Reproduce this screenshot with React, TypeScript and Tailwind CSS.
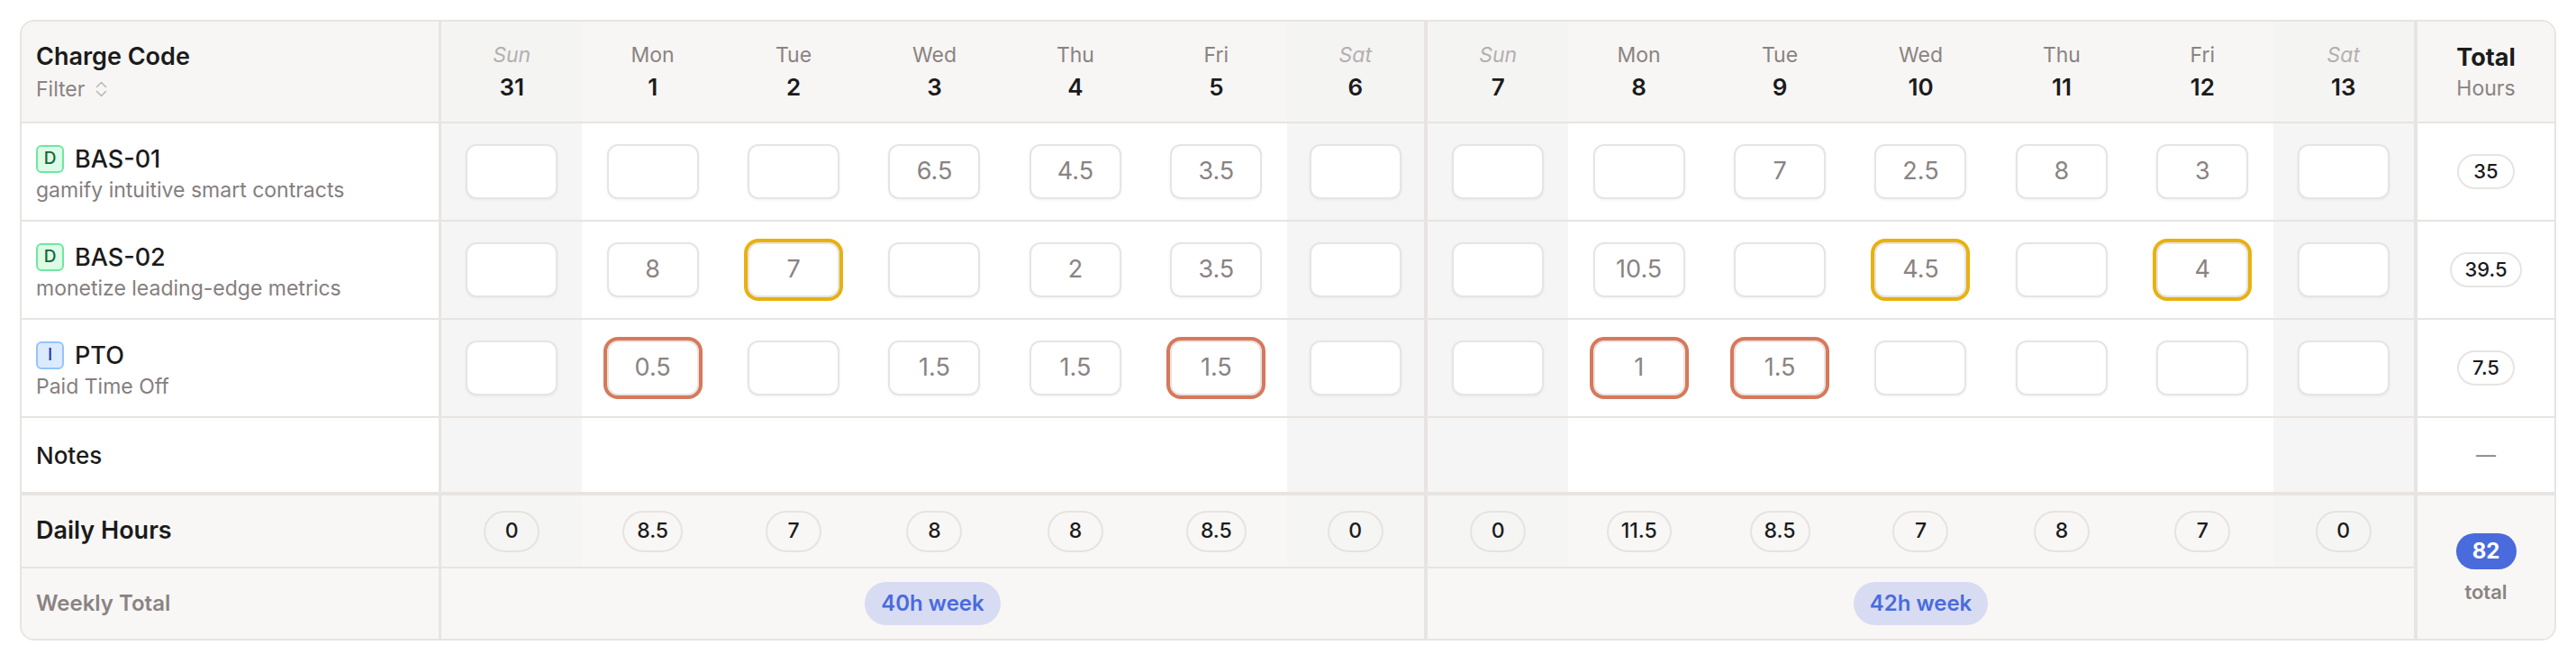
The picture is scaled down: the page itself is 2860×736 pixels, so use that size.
import React from "react";

type Mark = "" | "y" | "o";
type Cell = { v: string; m?: Mark };

const days = [
  { d: "Sun", n: "31", we: true },
  { d: "Mon", n: "1" },
  { d: "Tue", n: "2" },
  { d: "Wed", n: "3" },
  { d: "Thu", n: "4" },
  { d: "Fri", n: "5" },
  { d: "Sat", n: "6", we: true },
  { d: "Sun", n: "7", we: true },
  { d: "Mon", n: "8" },
  { d: "Tue", n: "9" },
  { d: "Wed", n: "10" },
  { d: "Thu", n: "11" },
  { d: "Fri", n: "12" },
  { d: "Sat", n: "13", we: true },
];

const c = (v: string, m: Mark = ""): Cell => ({ v, m });

const rows = [
  {
    badge: "D",
    kind: "g",
    code: "BAS-01",
    desc: "gamify intuitive smart contracts",
    total: "35",
    cells: [c(""), c(""), c(""), c("6.5"), c("4.5"), c("3.5"), c(""), c(""), c(""), c("7"), c("2.5"), c("8"), c("3"), c("")],
  },
  {
    badge: "D",
    kind: "g",
    code: "BAS-02",
    desc: "monetize leading-edge metrics",
    total: "39.5",
    cells: [c(""), c("8"), c("7", "y"), c(""), c("2"), c("3.5"), c(""), c(""), c("10.5"), c(""), c("4.5", "y"), c(""), c("4", "y"), c("")],
  },
  {
    badge: "I",
    kind: "b",
    code: "PTO",
    desc: "Paid Time Off",
    total: "7.5",
    cells: [c(""), c("0.5", "o"), c(""), c("1.5"), c("1.5"), c("1.5", "o"), c(""), c(""), c("1", "o"), c("1.5", "o"), c(""), c(""), c(""), c("")],
  },
];

const daily = ["0", "8.5", "7", "8", "8", "8.5", "0", "0", "11.5", "8.5", "7", "8", "7", "0"];

function dayBorder(i: number) {
  return i === 6 ? "border-r-[4px]" : "";
}

function InputBox({ cell }: { cell: Cell }) {
  const ring =
    cell.m === "y" ? "ring-4 ring-[#e8b10e]" : cell.m === "o" ? "ring-4 ring-[#d6795a]" : "";
  return (
    <div
      className={`w-[102px] h-[61px] rounded-[12px] border-2 border-[#e8e4e3] bg-white shadow-[0_1px_3px_rgba(0,0,0,0.06)] flex items-center justify-center text-[27px] text-[#8a8383] ${ring}`}
    >
      {cell.v}
    </div>
  );
}

export default function App() {
  return (
    <div className="w-[2860px] h-[736px] bg-white p-[22px] font-['Inter','Noto_Sans',sans-serif] text-[#1b1b1b]">
      <div className="rounded-[16px] border-2 border-[#e7e4e2] overflow-hidden grid grid-cols-[466px_repeat(14,minmax(0,1fr))_156px] grid-rows-[113px_109px_109px_109px_86px_81px_78px]">
        {/* Header */}
        <div className="bg-[#f7f6f4] border-b-2 border-r-[3px] border-[#e7e4e2] flex flex-col justify-center pl-[16px] gap-[6px]">
          <div className="text-[27px] font-semibold leading-[32px]">Charge Code</div>
          <div className="flex items-center gap-[12px] text-[23px] text-[#8a8383] leading-[28px]">
            <span>Filter</span>
            <svg width="13" height="18" viewBox="0 0 13 18" fill="none" stroke="#bdb7b7" strokeWidth="1.6" strokeLinecap="round" strokeLinejoin="round">
              <path d="M1.5 6.5 L6.5 1.5 L11.5 6.5" />
              <path d="M1.5 11.5 L6.5 16.5 L11.5 11.5" />
            </svg>
          </div>
        </div>
        {days.map((d, i) => (
          <div
            key={"h" + i}
            className={`${d.we ? "bg-[#f4f4f3]" : "bg-[#f7f6f4]"} border-b-2 border-[#e7e4e2] ${dayBorder(i)} flex flex-col items-center justify-center gap-[6px]`}
          >
            <div className={`text-[23px] leading-[28px] ${d.we ? "italic text-[#b5afaf]" : "text-[#8a8383]"}`}>{d.d}</div>
            <div className="text-[26px] leading-[32px] font-semibold">{d.n}</div>
          </div>
        ))}
        <div className="bg-[#f7f6f4] border-b-2 border-l-[4px] border-[#e7e4e2] flex flex-col items-center justify-center gap-[4px]">
          <div className="text-[27px] leading-[32px] font-bold">Total</div>
          <div className="text-[23px] leading-[28px] text-[#8a8383]">Hours</div>
        </div>

        {/* Code rows */}
        {rows.map((r, ri) => (
          <React.Fragment key={"r" + ri}>
            <div className="bg-white border-b-2 border-r-[3px] border-[#e7e4e2] flex flex-col justify-center pl-[16px] gap-[4px] pt-[4px]">
              <div className="flex items-center gap-[12px]">
                <div
                  className={`w-[31px] h-[31px] rounded-[6px] border-2 flex items-center justify-center text-[19px] font-medium ${
                    r.kind === "g"
                      ? "bg-[#dcfce7] border-[#6ee7a0] text-[#166534]"
                      : "bg-[#dbeafe] border-[#93c5fd] text-[#1e40af]"
                  }`}
                >
                  {r.badge}
                </div>
                <div className="text-[27px] leading-[32px] font-medium">{r.code}</div>
              </div>
              <div className="text-[23px] leading-[28px] text-[#857e7e]">{r.desc}</div>
            </div>
            {r.cells.map((cell, i) => (
              <div
                key={"c" + i}
                className={`${days[i].we ? "bg-[#f5f5f5]" : "bg-white"} border-b-2 border-[#e7e4e2] ${dayBorder(i)} flex items-center justify-center`}
              >
                <InputBox cell={cell} />
              </div>
            ))}
            <div className="bg-white border-b-2 border-l-[4px] border-[#e7e4e2] flex items-center justify-center">
              <div className="h-[39px] min-w-[64px] px-[14px] rounded-full border-2 border-[#e7e4e2] flex items-center justify-center text-[22px] font-medium">
                {r.total}
              </div>
            </div>
          </React.Fragment>
        ))}

        {/* Notes */}
        <div className="bg-white border-b-4 border-r-[3px] border-[#e7e4e2] flex items-center pl-[16px] text-[26px] font-medium">
          Notes
        </div>
        {days.map((d, i) => (
          <div key={"n" + i} className={`${d.we ? "bg-[#f5f5f5]" : "bg-white"} border-b-4 border-[#e7e4e2] ${dayBorder(i)}`} />
        ))}
        <div className="bg-white border-b-4 border-l-[4px] border-[#e7e4e2] flex items-center justify-center text-[22px] text-[#8a8383]">
          —
        </div>

        {/* Daily Hours */}
        <div className="bg-[#f8f7f5] border-b-2 border-r-[3px] border-[#e7e4e2] flex items-center pl-[16px] text-[27px] font-semibold">
          Daily Hours
        </div>
        {daily.map((v, i) => (
          <div
            key={"d" + i}
            className={`${days[i].we ? "bg-[#f5f5f4]" : "bg-[#f8f7f5]"} border-b-2 border-[#e7e4e2] ${dayBorder(i)} flex items-center justify-center`}
          >
            <div className="h-[46px] min-w-[62px] px-[14px] rounded-full border-2 border-[#e6e3e1] flex items-center justify-center text-[23px] font-medium">
              {v}
            </div>
          </div>
        ))}
        <div className="row-span-2 bg-[#f8f7f5] border-l-[4px] border-[#e7e4e2] flex flex-col items-center justify-center gap-[12px] pt-[2px]">
          <div className="h-[40px] min-w-[67px] px-[14px] rounded-full bg-[#4a6bdc] text-white flex items-center justify-center text-[24px] font-bold">
            82
          </div>
          <div className="text-[22px] font-semibold text-[#8a8383] leading-[26px]">total</div>
        </div>

        {/* Weekly Total */}
        <div className="bg-[#f8f7f5] border-r-[3px] border-[#e7e4e2] flex items-center pl-[16px] text-[24px] font-semibold text-[#8a8383]">
          Weekly Total
        </div>
        <div className="col-span-7 bg-[#f8f7f5] border-r-[4px] border-[#e7e4e2] flex items-center justify-center">
          <div className="h-[48px] px-[18px] rounded-full bg-[#d7dcf3] text-[#4a6bdc] flex items-center text-[24px] font-semibold">
            40h week
          </div>
        </div>
        <div className="col-span-7 bg-[#f8f7f5] flex items-center justify-center">
          <div className="h-[48px] px-[18px] rounded-full bg-[#d7dcf3] text-[#4a6bdc] flex items-center text-[24px] font-semibold">
            42h week
          </div>
        </div>
      </div>
    </div>
  );
}
